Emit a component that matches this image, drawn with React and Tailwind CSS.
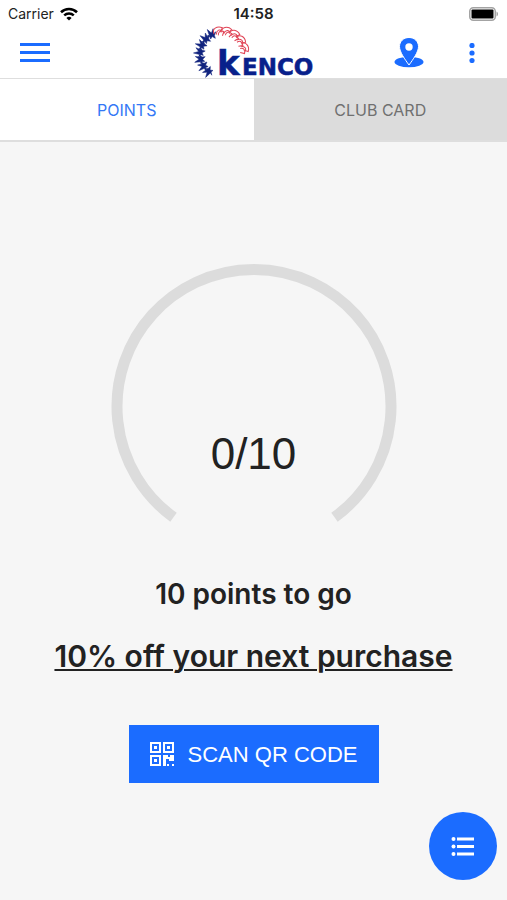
import React from "react";

const RED_TEETH = [-8, 13, 34, 55, 76];
const BLUE_TEETH = [-28, -47, -66, -85, -104, -123, -142];

function StatusBar() {
  return (
    <div className="flex h-7 items-center justify-between px-2 font-['Inter','Liberation_Sans',sans-serif] text-sm leading-5 text-[#222]">
      <div className="flex flex-1 items-center gap-[6px]">
        <span>Carrier</span>
        <svg className="h-[14px] w-[18px]" viewBox="0 0 18 14" fill="none" stroke="#000" aria-hidden="true">
          <path d="M1 5.2a11.5 11.5 0 0 1 16 0" strokeWidth="2.6" />
          <path d="M4.2 8.4a7 7 0 0 1 9.6 0" strokeWidth="2.4" />
          <path d="M9 13.6 6.4 11a3.8 3.8 0 0 1 5.2 0z" fill="#000" stroke="none" />
        </svg>
      </div>
      <span className="text-[15px] font-semibold">14:58</span>
      <div className="flex flex-1 justify-end">
        <svg className="h-[14px] w-[30px]" viewBox="0 0 30 14" aria-hidden="true">
          <rect x="0.75" y="0.75" width="25.5" height="12.5" rx="3.5" fill="#fff" stroke="#a3a3a3" strokeWidth="1.5" />
          <rect x="2.5" y="2.5" width="22" height="9" rx="1" fill="#000" />
          <path d="M27.5 4.5c2 .8 2 4.2 0 5z" fill="#a3a3a3" />
        </svg>
      </div>
    </div>
  );
}

function Logo() {
  return (
    <svg className="h-[50px] w-32 overflow-visible" viewBox="0 0 128 50" role="img" aria-label="Kenco">
      {BLUE_TEETH.map((a) => (
        <path
          key={a}
          transform={`translate(32 26) rotate(${a})`}
          d="M-5-23-2.500-22-1.500-28.500.500-23.500 4-26.500 2.500-22 5-22.500 2-20 1.500-17-.500-20-3-18.500-2.500-21z"
          fill="#10237e"
          stroke="#10237e"
          strokeWidth="0.5"
        />
      ))}
      {RED_TEETH.map((a) => (
        <path
          key={a}
          transform={`translate(32 26) rotate(${a})`}
          d="M-5-21c-2-5 4-8 9-5l-2 3c0-2-4-2-5 3M-1-19c0-3 2-5 6-3l-2 4"
          fill="none"
          stroke="#e04355"
          strokeWidth="1"
        />
      ))}
      <g fill="#08208b" stroke="#08208b" strokeWidth="0.5" className="font-['DejaVu_Sans',sans-serif] font-bold">
        <text x="27" y="47" fontSize="34">k</text>
        <text x="52" y="47" fontSize="23">ENCO</text>
      </g>
    </svg>
  );
}

function Header() {
  return (
    <header className="flex h-[50px] items-center justify-between px-5 text-[#1b6cff]">
      <div className="flex flex-1">
        <button type="button" aria-label="Menu">
          <svg className="h-5 w-[30px]" viewBox="0 0 30 20" fill="currentColor">
            <path d="M0 0h30v3H0zM0 8h30v3H0zM0 16h30v3H0z" />
          </svg>
        </button>
      </div>
      <Logo />
      <div className="flex flex-1 items-center justify-end gap-[45px]">
        <button type="button" aria-label="Locations">
          <svg className="h-[30px] w-[30px]" viewBox="0 0 30 30" fill="currentColor">
            <ellipse cx="15" cy="24" rx="14.5" ry="5.2" />
            <path d="M15-.5C9.500-.5 5.500 3.500 5.500 8.500c0 5.500 5.500 13 9.500 18.500 4-5.500 9.500-13 9.500-18.500 0-5-4-9-9.500-9z" stroke="#fff" strokeWidth="1" />
            <circle cx="15" cy="9" r="3.700" fill="#fff" />
          </svg>
        </button>
        <button type="button" aria-label="More options" className="pr-3">
          <svg className="h-5 w-[6px]" viewBox="0 0 6 20" fill="currentColor">
            <circle cx="3" cy="2.500" r="2.600" />
            <circle cx="3" cy="10" r="2.600" />
            <circle cx="3" cy="17.500" r="2.600" />
          </svg>
        </button>
      </div>
    </header>
  );
}

function Gauge() {
  return (
    <div className="grid w-[286px] place-items-center">
      <svg className="col-start-1 row-start-1 h-[260px] w-full" viewBox="0 0 286 260" aria-hidden="true">
        <path d="M62.500 254.300A137 137 0 1 1 223.500 254.300" fill="none" stroke="#dcdcdc" strokeWidth="11" />
      </svg>
      <p className="col-start-1 row-start-1 pt-[122px] font-['Liberation_Sans',sans-serif] text-[44px] leading-[48px]">0/10</p>
    </div>
  );
}

export default function App() {
  return (
    <div className="flex min-h-screen flex-col bg-[#f6f6f6] font-['Inter','Liberation_Sans',sans-serif] text-[#222]">
      <div className="bg-white">
        <StatusBar />
        <Header />
      </div>
      <div role="tablist" className="grid h-16 grid-cols-2 border-b-2 border-t border-[#dedede] text-base">
        <button type="button" role="tab" aria-selected="true" className="bg-white text-[#3478f6]">POINTS</button>
        <button type="button" role="tab" aria-selected="false" className="bg-[#dcdcdc] text-[#707070]">CLUB CARD</button>
      </div>
      <main className="flex flex-1 flex-col items-center pt-[121px]">
        <Gauge />
        <p className="mt-[53px] text-[28px] font-semibold leading-9">10 points to go</p>
        <a href="#reward" className="mt-[26px] text-[30px] font-semibold leading-9 underline decoration-2 underline-offset-2">10% off your next purchase</a>
        <button type="button" className="mt-[51px] flex h-[58px] w-[250px] items-center justify-center gap-[14px] bg-[#1b6cff] font-['Liberation_Sans',sans-serif] text-[22px] text-white">
          <svg className="h-6 w-6" viewBox="0 0 24 24" fill="none" stroke="currentColor" strokeWidth="2" aria-hidden="true">
            <path d="M1 1h9v9H1zM14 1h9v9h-9zM1 14h9v9H1z" />
            <path d="M4 4h3v3H4zM17 4h3v3h-3zM4 17h3v3H4zM13 13h5v2h2v-2h4v6h-5v-2h-3v7h-3zM17 22h2v2h-2zM22 22h2v2h-2z" fill="currentColor" stroke="none" />
          </svg>
          SCAN QR CODE
        </button>
      </main>
      <button type="button" aria-label="Open list" className="fixed bottom-5 right-[10px] grid h-[68px] w-[68px] place-items-center rounded-full bg-[#1b6cff] text-white">
        <svg className="h-[19px] w-6" viewBox="0 0 24 19" fill="currentColor">
          <circle cx="2.500" cy="2" r="2" /><circle cx="2.500" cy="9.500" r="2" /><circle cx="2.500" cy="17" r="2" />
          <path d="M6 .6h17v2.800H6zM6 8.100h17v2.800H6zM6 15.600h17v2.800H6z" />
        </svg>
      </button>
    </div>
  );
}
